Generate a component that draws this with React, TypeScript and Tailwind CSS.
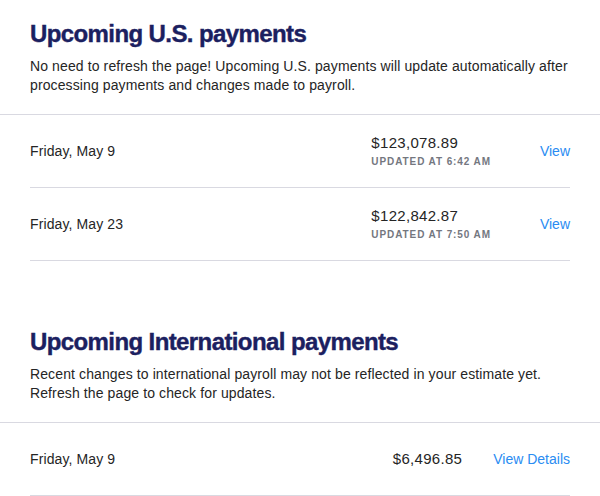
const usPayments = [
  { date: 'Friday, May 9', amount: '$123,078.89', updated: 'Updated at 6:42 AM' },
  { date: 'Friday, May 23', amount: '$122,842.87', updated: 'Updated at 7:50 AM' },
];

const intlPayments = [{ date: 'Friday, May 9', amount: '$6,496.85' }];

function SectionHeader({ title, children }: { title: string; children: React.ReactNode }) {
  return (
    <div className="px-[30px] pb-[19px] border-b border-[#d9d9e1]">
      <h2 className="text-[24px] leading-[32px] font-bold tracking-[-0.025em] text-[#1b2060] [-webkit-text-stroke:0.4px_#1b2060]">
        {title}
      </h2>
      <p className="mt-[7px] text-[14px] leading-[19px] tracking-[0.008em] text-[#252525]">{children}</p>
    </div>
  );
}

export default function App() {
  return (
    <div className="w-[600px] h-[496px] overflow-hidden bg-white font-['Liberation_Sans',Arial,sans-serif]">
      <div className="pt-[18px]">
        <SectionHeader title="Upcoming U.S. payments">
          No need to refresh the page! Upcoming U.S. payments will update automatically after processing payments and
          changes made to payroll.
        </SectionHeader>
        <div className="px-[30px]">
          {usPayments.map((p) => (
            <div key={p.date} className="h-[73px] flex items-center justify-between border-b border-[#d9d9e1]">
              <span className="text-[14px] tracking-[0.008em] text-[#252525]">{p.date}</span>
              <div className="flex items-center gap-[49px]">
                <div className="flex flex-col">
                  <span className="text-[15px] leading-[18px] tracking-[0.02em] text-[#252525]">{p.amount}</span>
                  <span className="mt-[4px] text-[10px] leading-[12px] font-bold uppercase tracking-[0.09em] text-[#74777f]">
                    {p.updated}
                  </span>
                </div>
                <a className="text-[14px] text-[#2a8cf2] pt-[1px]">View</a>
              </div>
            </div>
          ))}
        </div>
      </div>

      <div className="pt-[65px]">
        <SectionHeader title="Upcoming International payments">
          Recent changes to international payroll may not be reflected in your estimate yet. Refresh the page to check
          for updates.
        </SectionHeader>
        <div className="px-[30px]">
          {intlPayments.map((p) => (
            <div key={p.date} className="h-[73px] flex items-center justify-between border-b border-[#d9d9e1]">
              <span className="text-[14px] tracking-[0.008em] text-[#252525]">{p.date}</span>
              <div className="flex items-center gap-[31px]">
                <span className="text-[15px] tracking-[0.02em] text-[#252525]">{p.amount}</span>
                <a className="text-[14px] text-[#2a8cf2]">View Details</a>
              </div>
            </div>
          ))}
        </div>
      </div>
    </div>
  );
}
